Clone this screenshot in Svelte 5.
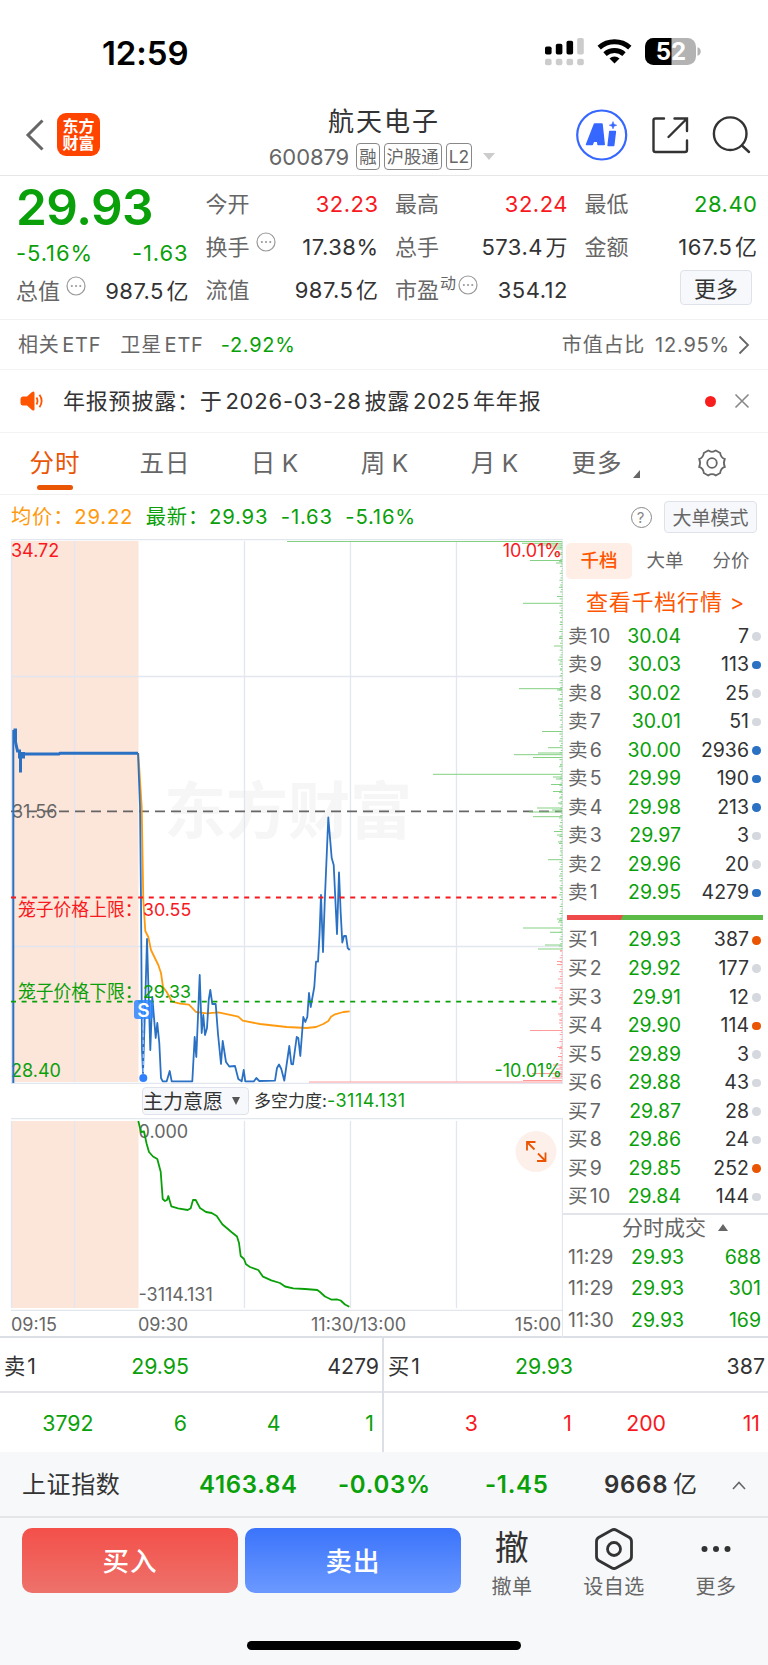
<script>
const quotes = [
  [
    { label: '今开', value: '32.23', tone: 'red' },
    { label: '换手', value: '17.38%', info: true },
    { label: '流值', value: '987.5', unit: '亿' },
  ],
  [
    { label: '最高', value: '32.24', tone: 'red' },
    { label: '总手', value: '573.4', unit: '万' },
    { label: '市盈', sup: '动', value: '354.12', info: true },
  ],
  [
    { label: '最低', value: '28.40', tone: 'green' },
    { label: '金额', value: '167.5', unit: '亿' },
  ],
];

const tabs = ['分时', '五日', '日\u2009K', '周\u2009K', '月\u2009K', '更多'];
let active_tab = '分时';

// [level, price, volume, dot]
const sells = [
  [10, '30.04', 7, ''],
  [9, '30.03', 113, 'blue'],
  [8, '30.02', 25, ''],
  [7, '30.01', 51, ''],
  [6, '30.00', 2936, 'blue'],
  [5, '29.99', 190, 'blue'],
  [4, '29.98', 213, 'blue'],
  [3, '29.97', 3, ''],
  [2, '29.96', 20, ''],
  [1, '29.95', 4279, 'blue'],
];
const buys = [
  [1, '29.93', 387, 'orange'],
  [2, '29.92', 177, ''],
  [3, '29.91', 12, ''],
  [4, '29.90', 114, 'orange'],
  [5, '29.89', 3, ''],
  [6, '29.88', 43, ''],
  [7, '29.87', 28, ''],
  [8, '29.86', 24, ''],
  [9, '29.85', 252, 'orange'],
  [10, '29.84', 144, ''],
];
const trades = [
  ['11:29', '29.93', 688],
  ['11:29', '29.93', 301],
  ['11:30', '29.93', 169],
];

const price_line =
  '138,753 140,806 141,900 142,1050 143,1073 145,1010 147,939 150.3,1050 152.3,997 155.7,1038 157.3,1023 159.3,1043 161,1078 162.7,1081.3 166.7,1081.3 169.7,1071 171.7,1081.3 192.3,1081.3 194.7,1037 196.3,1057 199.7,975 201.7,1033 203.3,1015 205,1035 207,1028 208.7,1000 210.3,990 212.3,1004 215.7,1004 218,1034 221,1064 222.7,1041 226,1062 229.3,1066.5 235,1066 238.3,1079 241.7,1081.3 243.7,1070 245.3,1081.3 254,1081.3 256.3,1078 259.3,1081 275,1080.7 277,1068 279,1064.5 281.3,1069 284.3,1080.7 289.3,1046 291.3,1064 293,1064.3 296.7,1037 298.3,1038 300.3,1056 303.3,1017 305.3,1022 307.3,1017 309,993 310.7,1007 314.3,987 316,961.7 318,961.7 319.5,935 321,895 323,952 324.7,903 328.3,817.5 331.7,858 333.7,865 337,934 339,872.5 340.7,913 342.3,942.5 344,936 346,936 347.7,948 349.7,950';
const avg_line =
  '138.3,753 141.7,807 143.3,900 145.3,931 148.3,937 151,950 158.3,965 161,973 163,987 166.7,992 172,1001.7 180,1003.7 189,1004.7 196,1012 206.7,1013.3 218.3,1012.3 238.3,1016.7 242.7,1020.7 260,1024 286.7,1027 306.7,1028 316,1027 323.3,1024 328.3,1021 331,1016.7 335,1014.3 343.3,1012 349.7,1011.3';
const power_line =
  '138.3,1121 141,1132 144,1131.5 146.7,1144 149,1152 153,1156.5 157.3,1159 160.7,1171.7 162.7,1199 165,1201 167,1200 168.3,1196 171.3,1206.3 178,1208.3 187.7,1210 190.7,1208.3 193,1200 195.7,1200 200,1208 206,1212 211.7,1213 216.7,1216 222.3,1224.3 231.7,1232.3 237,1236.5 239,1243 240.7,1256 244,1259 246,1264.3 250,1267 258.3,1270 263,1276.7 271.3,1280.3 280,1283 285,1286.5 293.3,1288.3 305,1289 317.3,1290 320,1292 325,1296.5 331.7,1299.7 336.7,1299.3 340.7,1300.5 345,1304.5 349.3,1306.7';

// order depth drawn from the right edge: [y, start x]
const ask_depth = [
  [541.5, 287], [543.3, 522], [545, 540], [547, 550], [549, 554], [554, 554], [560.5, 530], [563, 556],
  [587, 561], [596.5, 557], [603.3, 523], [622, 560], [637, 559], [646, 554], [660, 558], [670, 560],
  [688.7, 519], [690, 557], [699, 558], [705, 559], [731.5, 542], [747.7, 548], [753, 538], [754.7, 514],
  [757.5, 533], [765, 560], [774.3, 433], [777, 553], [779, 556], [784.5, 551], [791.5, 553], [798, 559],
  [803, 558], [808, 537], [810, 552], [812, 529], [816.7, 533], [826, 559], [831.5, 554], [835, 557],
  [842, 558], [851, 560], [859.7, 548], [876, 559], [889, 560], [919, 557], [922, 558], [928, 523],
  [932.3, 550], [945, 545], [949, 538],
];
const bid_depth = [
  [951, 560], [961.5, 557], [964.5, 557], [979, 558], [988, 555], [998, 559], [1004, 558], [1008, 560],
  [1014, 558], [1020, 559], [1030.5, 530], [1047.5, 557], [1056.5, 558], [1065, 553], [1069, 556],
  [1073.5, 532], [1076, 555], [1078, 552], [1080.5, 523], [1082, 309],
];
const ticks = Array.from({ length: 230 }, (_, i) => ({
  y: 543 + i * 2.33,
  w: 0.6 + ((i * 37) % 11) * 0.28,
}));
</script>

{#snippet info()}
  <svg class="info" viewBox="0 0 20 20">
    <circle cx="10" cy="10" r="9" />
    <path d="M5.8 10h.1M10 10h.1M14.2 10h.1" />
  </svg>
{/snippet}

{#snippet level(side, row)}
  <div class="level">
    <span class="side">{side}&hairsp;{row[0]}</span>
    <span class="price">{row[1]}</span>
    <span class="volume">{row[2]}</span>
    <i class="dot {row[3]}"></i>
  </div>
{/snippet}

<main>
  <div class="status">
    <span class="clock">12:59</span>
    <svg width="156" height="28" viewBox="545 38 156 28">
      <g>
        <rect x="545" y="46.5" width="6.6" height="8" rx="1.8" />
        <rect x="555.8" y="43.8" width="6.6" height="10.7" rx="1.8" />
        <rect x="566.5" y="40.8" width="6.6" height="13.7" rx="1.8" />
      </g>
      <g fill="#ccc">
        <rect x="577.2" y="38" width="6.6" height="16.5" rx="1.8" />
        <rect x="545" y="58.7" width="6.6" height="6.6" rx="2" />
        <rect x="555.8" y="58.7" width="6.6" height="6.6" rx="2" />
        <rect x="566.5" y="58.7" width="6.6" height="6.6" rx="2" />
        <rect x="577.2" y="58.7" width="6.6" height="6.6" rx="2" />
      </g>
      <g fill="none" stroke="#000" stroke-width="5">
        <path d="M599.2 47.6a23 23 0 0 1 30.6 0" />
        <path d="M605 54.2a14.4 14.4 0 0 1 19 0" />
      </g>
      <path d="M614.5 63.5l-5-5a7.6 7.6 0 0 1 10 0z" />
      <rect x="645" y="38" width="51" height="27" rx="8.5" fill="#b3b3b3" />
      <path d="M671.5 38h-18a8.5 8.5 0 0 0-8.5 8.5v10a8.5 8.5 0 0 0 8.5 8.5h18z" />
      <path d="M697.5 47.3c2 .5 3.200 2 3.200 4.200s-1.200 3.700-3.200 4.200z" fill="#b3b3b3" />
      <text class="battery" x="671" y="60" text-anchor="middle">52</text>
    </svg>
  </div>

  <header>
    <svg class="back" viewBox="0 0 20 34"><path d="M17.500 2.500 3 17l14.500 14.500" /></svg>
    <div class="logo"><span>东方</span><span>财富</span></div>
    <div class="title">
      <h1>航天电子</h1>
      <div class="sub">
        <span class="code">600879</span>
        <span class="tag">融</span>
        <span class="tag">沪股通</span>
        <span class="tag">L2</span>
        <svg width="12" height="7" viewBox="0 0 12 7"><path d="M0 0h12L6 7z" fill="#ccc" /></svg>
      </div>
    </div>
    <svg class="head-icons" viewBox="574 108 180 54">
      <circle cx="601.700" cy="135" r="24.500" fill="none" stroke="#3667ff" stroke-width="2.200" />
      <g fill="#3667ff" stroke="#3667ff" stroke-linejoin="round" stroke-width="1.500">
        <path fill-rule="evenodd" d="M586.500 144.500 594.500 124h7.500l2.200 20.500h-6.200l-.3-3.200h-4.200l-1.200 3.200zM595.500 136.800h2l-.2-4.500z" />
        <path d="M609.800 131.500h5.600l-1.700 14h-5.600z" />
        <path stroke-width=".5" d="M613 121.500l1 2.700 2.800 1-2.800 1-1 2.700-1-2.700-2.800-1 2.800-1z" />
      </g>
      <g fill="none" stroke="#333" stroke-width="2.400" stroke-linecap="round">
        <path d="M664 118.500h-8.500q-2 0-2 2v29.500q0 2 2 2h29.500q2 0 2-2v-9.500" />
        <path d="M674.500 118.500h12.500v12.500M686 119.500l-17.500 17.500" />
        <circle cx="730.200" cy="133.700" r="16.300" />
        <path d="M742 145.500l7 6.500" />
      </g>
    </svg>
  </header>

  <section class="quote">
    <div class="first">
      <div class="last-price">29.93</div>
      <div class="change green"><span>-5.16%</span><span>-1.63</span></div>
      <div class="cell total">
        <span class="label">总值{@render info()}</span>
        <span class="value">987.5&hairsp;亿</span>
      </div>
    </div>
    {#each quotes as column, i}
      <div class="column">
        {#each column as item}
          <div class="cell">
            <span class="label">
              {item.label}{#if item.sup}<sup>{item.sup}</sup>{/if}{#if item.info}{@render info()}{/if}
            </span>
            <span class="value {item.tone || ''}">{item.value}{item.unit ? '\u200a' + item.unit : ''}</span>
          </div>
        {/each}
        {#if i === 2}
          <div class="cell"><button class="more">更多</button></div>
        {/if}
      </div>
    {/each}
  </section>

  <section class="etf">
    <span class="related">相关&hairsp;ETF</span>
    <span>卫星&hairsp;ETF</span>
    <span class="green etf-change">-2.92%</span>
    <span class="ratio">市值占比</span>
    <span class="ratio-value">12.95%</span>
    <svg width="12" height="20" viewBox="0 0 12 20"><path d="M1.500 1.500 10 10l-8.500 8.500" /></svg>
  </section>

  <section class="notice">
    <svg class="horn" viewBox="0 0 24 20">
      <path d="M2.500 5.500h4.500l5-4.500q2.500-1.500 2.500 1v16q0 2.500-2.500 1l-5-4.500h-4.500q-2-.5-2-2.500v-4q0-2 2-2.500z" fill="#ff5500" />
      <path d="M16.500 6.500q2 3.500 0 7M19.500 3.800q4.300 6.200 0 12.400" fill="none" stroke="#ff5500" stroke-width="1.800" />
    </svg>
    <p>年报预披露：于&hairsp;2026-03-28&hairsp;披露&hairsp;2025&hairsp;年年报</p>
    <i class="unread"></i>
    <svg class="close" viewBox="0 0 16 16"><path d="M1.500 1.500l13 13M14.500 1.500l-13 13" /></svg>
  </section>

  <nav>
    {#each tabs as tab}
      <span class="tab" class:active={tab === active_tab}>{tab}</span>
    {/each}
    <svg class="corner" viewBox="0 0 7 8"><path d="M7 0v8H0z" /></svg>
    <svg class="gear" viewBox="0 0 30 28">
      <path d="M11.200 1.500q3.800 2.600 7.600 0l4.400 2.500q.4 4.600 4.600 6.100q-1.800 3.900 0 7.800-4.200 1.500-4.600 6.100l-4.400 2.500q-3.800-2.600-7.600 0l-4.400-2.500q-.4-4.600-4.600-6.100 1.800-3.900 0-7.800 4.200-1.500 4.600-6.100z" />
      <circle cx="15" cy="14" r="4.800" />
    </svg>
  </nav>

  <section class="summary">
    <span class="avg">均价：29.22</span>
    <span class="green">最新：29.93</span>
    <span class="green">-1.63</span>
    <span class="green">-5.16%</span>
    <span class="help">?</span>
    <button class="big-order">大单模式</button>
  </section>

  <section class="market">
    <div class="charts">
      <svg class="price-chart" viewBox="0 539 563 545">
        <rect x="11" y="541" width="127.500" height="541" fill="#fce5d9" />
        <text class="watermark" x="164" y="834">东方财富</text>
        <g class="grid">
          <path d="M11 539.500h552M11 1083.500h552" />
          <path d="M11.500 541v542M74.500 541v541M244.500 541v541M350.500 541v541M456.500 541v541M562.500 541v543M11 676.500h551M11 946.500h551" />
        </g>
        <path class="mid" d="M11 811.300h551" />
        <g class="asks">
          {#each ask_depth as [y, x]}
            <path d="M{x} {y}H562" />
          {/each}
        </g>
        <g class="bids">
          {#each bid_depth as [y, x]}
            <path d="M{x} {y}H562" />
          {/each}
        </g>
        {#each ticks as t}
          <path class={t.y < 950 ? 'asks' : 'bids'} d="M{562.5 - t.w} {t.y}H562.500" />
        {/each}
        <text class="gray" x="12" y="817.500">31.56</text>
        <text class="red" x="11" y="557">34.72</text>
        <text class="red" x="562" y="557" text-anchor="end">10.01%</text>
        <text class="green" x="11" y="1076.500">28.40</text>
        <text class="green" x="562" y="1076.500" text-anchor="end">-10.01%</text>
        <path class="auction" d="M13.300 1083V730" />
        <path class="opening" d="M13.500 730h2v12l2 9h2v5.500l1-4v20M18 757h7M19 753.500h6M22 754h37l1-.7h78" />
        <polyline class="average" points={avg_line} />
        <polyline class="last" points={price_line} />
        <path class="limit-up" d="M11 897.500h551" />
        <path class="limit-down" d="M11 1001.700h551" />
        <text class="red limit" x="18" y="915.500">笼子价格上限：</text>
        <text class="red limit" x="143" y="915.500">30.55</text>
        <text class="green limit" x="18" y="998">笼子价格下限：</text>
        <text class="green limit" x="143" y="998">29.33</text>
        <path class="sell-line" d="M143.300 1019v55" />
        <circle cx="143.300" cy="1078" r="4" fill="#2f80ff" />
        <rect class="sell-mark" x="134" y="1000" width="19" height="19" rx="3" />
        <text class="sell-text" x="143.500" y="1016.500" text-anchor="middle">S</text>
      </svg>

      <div class="indicator">
        <button>主力意愿<svg viewBox="0 0 8 8"><path d="M0 0h8L4 8z" /></svg></button>
        <span>多空力度:<b>-3114.131</b></span>
      </div>

      <svg class="power-chart" viewBox="0 1118 563 193">
        <rect x="11" y="1121" width="127.500" height="187" fill="#fce5d9" />
        <g class="grid">
          <path d="M11 1118.500h552M11 1310.500h552" />
          <path d="M11.500 1121v187M74.500 1121v187M244.500 1121v187M350.500 1121v187M456.500 1121v187M562.500 1118v193" />
        </g>
        <text class="gray" x="138.500" y="1138">0.000</text>
        <text class="gray" x="138.500" y="1300.500">-3114.131</text>
        <polyline class="power" points={power_line} />
        <circle cx="536" cy="1151.500" r="20.500" fill="#fdf0ea" />
        <path class="expand" d="M527 1150.500v-8.500h8.500M527 1142l7.500 7.500M545.500 1152.500v8.500h-8.500M545.500 1161l-7.500-7.500" />
      </svg>

      <div class="axis">
        <span>09:15</span>
        <span>09:30</span>
        <span>11:30/13:00</span>
        <span>15:00</span>
      </div>
    </div>

    <aside>
      <div class="book-tabs">
        <span class="on">千档</span>
        <span>大单</span>
        <span>分价</span>
      </div>
      <div class="depth-link">查看千档行情 &gt;</div>
      {#each sells as row}
        {@render level('卖', row)}
      {/each}
      <div class="balance"></div>
      {#each buys as row}
        {@render level('买', row)}
      {/each}
      <div class="trade-head">分时成交<svg viewBox="0 0 10 7"><path d="M5 0l5 7H0z" /></svg></div>
      {#each trades as [time, price, volume]}
        <div class="trade">
          <span>{time}</span>
          <span class="green">{price}</span>
          <span class="green volume">{volume}</span>
        </div>
      {/each}
    </aside>
  </section>

  <section class="queue">
    <div class="half">
      <div class="best">
        <span>卖&hairsp;1</span><span class="green">29.95</span><span>4279</span>
      </div>
      <div class="orders green">
        <span>3792</span><span>6</span><span>4</span><span>1</span>
      </div>
    </div>
    <div class="half">
      <div class="best">
        <span>买&hairsp;1</span><span class="green">29.93</span><span>387</span>
      </div>
      <div class="orders red">
        <span>3</span><span>1</span><span>200</span><span>11</span>
      </div>
    </div>
  </section>

  <section class="index">
    <span class="name">上证指数</span>
    <b class="green point">4163.84</b>
    <b class="green percent">-0.03%</b>
    <b class="green diff">-1.45</b>
    <b class="amount">9668&thinsp;<em>亿</em></b>
    <svg width="14" height="9" viewBox="0 0 14 9"><path d="M1 8l6-6.500L13 8" /></svg>
  </section>

  <footer>
    <div class="actions">
      <button class="buy">买入</button>
      <button class="sell">卖出</button>
      <div class="tool">
        <span class="glyph">撤</span>
        <span>撤单</span>
      </div>
      <div class="tool">
        <svg viewBox="0 0 42 42">
          <path d="M18.500 2.200q2.500-1.400 5 0L36 9.200q2.500 1.500 2.500 4.300v15q0 2.800-2.500 4.300l-12.500 7q-2.500 1.400-5 0L6 32.800q-2.500-1.500-2.500-4.300v-15Q3.500 10.700 6 9.200z" />
          <circle cx="21" cy="21" r="6.500" />
        </svg>
        <span>设自选</span>
      </div>
      <div class="tool">
        <svg viewBox="0 0 42 42" class="dots">
          <circle cx="9.500" cy="21" r="3" />
          <circle cx="21" cy="21" r="3" />
          <circle cx="32.500" cy="21" r="3" />
        </svg>
        <span>更多</span>
      </div>
    </div>
    <div class="home"></div>
  </footer>
</main>

<style>
:global(body) {
  background-color: #fff;
}

main {
  width: 768px;
  height: 1665px;
  overflow: hidden;
  font-family: Inter, 'Noto Sans CJK SC', sans-serif;
  font-size: 22px;
  line-height: 1;
  color: #333;
  display: flex;
  flex-direction: column;
}
main * {
  box-sizing: border-box;
}
svg {
  flex: none;
  display: block;
}
span,
button,
b {
  white-space: nowrap;
}
button {
  flex: none;
  font-family: inherit;
  color: inherit;
  padding: 0;
  border: 1px solid #dfe2ea;
  border-radius: 4px;
  background-color: #f7f8fb;
}
.green {
  color: #0aa00a;
  fill: #0aa00a;
}
.red {
  color: #f8191e;
  fill: #f8191e;
}
.gray {
  fill: #666;
}

.status {
  height: 103px;
  padding: 1px 67px 0 102px;
  display: flex;
  align-items: center;
  justify-content: space-between;
}
.clock {
  padding-top: 2px;
  color: #000;
  font-size: 33px;
  font-weight: 600;
  letter-spacing: -0.1px;
}
.battery {
  fill: #fff;
  font-size: 24px;
  font-weight: 700;
}

header {
  height: 73px;
  padding: 0 14px 0 25px;
  border-bottom: 1px solid #e6e6e6;
  display: flex;
  align-items: center;
}
.back {
  width: 20px;
  height: 34px;
  margin-top: -9px;
  fill: none;
  stroke: #666;
  stroke-width: 3;
}
.logo {
  width: 43px;
  height: 43px;
  margin: -9px 0 0 12px;
  border-radius: 9px;
  background-color: #ff4400;
  color: #fff;
  font-size: 16px;
  font-weight: 700;
  line-height: 17px;
  display: flex;
  flex-direction: column;
  align-items: center;
  justify-content: center;
}
.title {
  flex: 1;
  margin-left: 94px;
  display: flex;
  flex-direction: column;
  align-items: center;
}
h1 {
  margin: 0;
  font-size: 26px;
  line-height: 35px;
  font-weight: 400;
  letter-spacing: 2px;
}
.sub {
  height: 35px;
  margin-left: -4px;
  display: flex;
  align-items: center;
  color: #666;
}
.code {
  margin-right: 7px;
  letter-spacing: -0.1px;
}
.tag {
  height: 27px;
  margin-right: 4px;
  padding: 0 2px;
  border: 1px solid #888;
  border-radius: 4px;
  font-size: 17.400px;
  line-height: 25px;
}
.sub svg {
  margin-left: 7px;
}
.head-icons {
  width: 180px;
  height: 54px;
  margin-top: -9px;
}

.quote {
  height: 144px;
  padding: 6px 11px 0 16px;
  border-bottom: 1px solid #f1f1f1;
  display: grid;
  grid-template-columns: repeat(4, 1fr);
  column-gap: 17px;
}
.last-price {
  height: 50px;
  line-height: 50px;
  font-size: 49.500px;
  font-weight: 600;
  letter-spacing: -0.5px;
  color: #0aa00a;
}
.change {
  height: 42px;
  display: flex;
  align-items: center;
  justify-content: space-between;
  letter-spacing: 0.9px;
}
.value {
  letter-spacing: 0.5px;
  margin-right: -0.5px;
}
.cell {
  height: 43px;
  display: flex;
  align-items: center;
  justify-content: space-between;
}
.total {
  height: 33px;
}
.label {
  color: #666;
  display: flex;
  align-items: center;
}
sup {
  font-size: 16px;
  line-height: 1;
  margin: -14px 2px 0 1px;
}
.info {
  width: 20px;
  height: 20px;
  margin: -10px 0 0 6px;
  fill: none;
  stroke: #999;
  stroke-width: 1.2;
}
sup + .info {
  margin-left: 0;
}
.info path {
  stroke-width: 2;
  stroke-linecap: round;
}
.more {
  width: 72px;
  height: 35px;
  margin: -4px 5px 0 auto;
  padding-bottom: 3px;
  font-size: 22px;
}

.etf {
  height: 50px;
  padding: 0 18px 0 18px;
  border-bottom: 1px solid #f3f3f3;
  display: flex;
  align-items: center;
  font-size: 20px;
  color: #666;
  letter-spacing: 0.8px;
}
.related {
  margin-right: 19px;
}
.etf-change {
  margin-left: 17px;
  letter-spacing: 0.7px;
}
.ratio {
  margin-left: auto;
}
.ratio-value {
  margin: 0 8px 0 10px;
  letter-spacing: 0.8px;
}
.etf svg {
  fill: none;
  stroke: #666;
  stroke-width: 1.8;
}

.notice {
  height: 63px;
  padding: 0 18px 0 20px;
  border-bottom: 1px solid #f3f3f3;
  display: flex;
  align-items: center;
}
.horn {
  width: 24px;
  height: 20px;
  margin-right: 19px;
}
.notice p {
  margin: 0;
  flex: 1;
  letter-spacing: 0.8px;
}
.unread {
  width: 11px;
  height: 11px;
  margin-right: 18px;
  border-radius: 50%;
  background-color: #f91e1e;
}
.close {
  width: 16px;
  height: 16px;
  stroke: #888;
  stroke-width: 1.6;
}

nav {
  height: 62px;
  border-bottom: 1px solid #f1f1f1;
  display: flex;
  align-items: center;
  color: #666;
  font-size: 24.500px;
}
.tab {
  width: 110px;
  height: 61px;
  line-height: 61px;
  text-align: center;
  letter-spacing: 1px;
  display: flex;
  flex-direction: column;
  align-items: center;
}
.tab:nth-child(6) {
  width: 94px;
}
.active {
  color: #ea5504;
}
.active::after {
  content: '';
  width: 36px;
  height: 5px;
  margin-top: -9px;
  border-radius: 3px;
  background-color: #ea5504;
}
.corner {
  width: 7px;
  height: 8px;
  margin: 20px 57px 0 -11px;
  fill: #666;
}
.gear {
  width: 30px;
  height: 28px;
  margin-top: -1px;
  fill: none;
  stroke: #666;
  stroke-width: 1.8;
}

.summary {
  height: 44px;
  padding: 0 11px;
  display: flex;
  align-items: center;
  gap: 12.500px;
  font-size: 20.300px;
  letter-spacing: 0.8px;
}
.avg {
  color: #ff9a0f;
}
.help {
  width: 21px;
  height: 21px;
  margin-left: auto;
  border: 1px solid #888;
  border-radius: 50%;
  font-size: 15px;
  line-height: 19px;
  text-align: center;
  color: #888;
}
.big-order {
  width: 93px;
  height: 32px;
  font-size: 19px;
  padding-bottom: 2px;
  color: #666;
}

.market {
  height: 799px;
  border-bottom: 2px solid #dcdfe5;
  display: flex;
}
.charts {
  width: 563px;
}
.charts text {
  font-size: 18px;
}
.charts text.limit {
  font-size: 17.8px;
}
.charts text.watermark {
  font-size: 62px;
  font-weight: 700;
  fill: #f6f6f6;
}
.price-chart {
  width: 563px;
  height: 545px;
}
.grid {
  stroke: #e2e6ef;
  stroke-width: 1.3;
}
.mid {
  stroke: #666;
  stroke-width: 1.8;
  stroke-dasharray: 10 6;
}
.asks {
  stroke: #84d184;
}
.bids {
  stroke: #ff9b9b;
}
.auction {
  stroke: #2a71c4;
  stroke-width: 2;
}
.opening {
  fill: none;
  stroke: #2a71c4;
  stroke-width: 3;
}
.last,
.average,
.power {
  fill: none;
  stroke: #2a71c4;
  stroke-width: 1.8;
  stroke-linejoin: round;
}
.average {
  stroke: #ff9a0f;
}
.power {
  stroke: #0aa00a;
}
.limit-up,
.limit-down {
  stroke: #f8191e;
  stroke-width: 1.8;
  stroke-dasharray: 5 5.6;
}
.limit-down {
  stroke: #0aa00a;
}
.sell-line {
  stroke: #8fbaff;
  stroke-width: 1.5;
  stroke-dasharray: 4 3;
}
.sell-mark {
  fill: #2f86ff;
  fill-opacity: 0.85;
}
.charts text.sell-text {
  font-weight: 600;
  font-size: 19px;
  fill: #fff;
}

.indicator {
  height: 34px;
  padding: 3px 0 3px 142px;
  display: flex;
  align-items: center;
  font-size: 17px;
}
.indicator button {
  width: 107px;
  height: 28px;
  margin-right: 5px;
  padding-bottom: 1px;
  font-size: 20px;
  display: flex;
  align-items: center;
}
.indicator button svg {
  width: 8px;
  height: 8px;
  margin-left: 9px;
  fill: #555;
}
.indicator b {
  font-weight: 400;
  font-size: 18px;
  letter-spacing: 0.5px;
  color: #0aa00a;
}
.power-chart {
  width: 563px;
  height: 193px;
}
.expand {
  fill: none;
  stroke: #ea5504;
  stroke-width: 1.8;
}
.axis {
  height: 27px;
  padding: 0 1px 0 11px;
  border-right: 1px solid #e2e6ef;
  display: grid;
  grid-template-columns: 127px 127px 1fr auto;
  align-items: center;
  font-size: 18px;
  color: #666;
}
.axis span:nth-child(3) {
  margin-left: 46px;
}

aside {
  width: 205px;
  padding-top: 4px;
}
.book-tabs {
  padding-left: 3px;
  display: flex;
  color: #666;
  font-size: 18.500px;
}
.book-tabs span {
  width: 66px;
  height: 36px;
  border-radius: 5px;
  line-height: 34px;
  text-align: center;
}
.book-tabs .on {
  background-color: #ffeee5;
  color: #ff5500;
  font-weight: 500;
}
.depth-link {
  height: 43px;
  line-height: 46px;
  text-align: center;
  color: #ff5500;
  font-size: 22px;
  letter-spacing: 0.8px;
}
.level {
  height: 28.56px;
  padding: 0 7px 0 5px;
  display: grid;
  grid-template-columns: 57px 56px 68px 1fr;
  align-items: center;
  font-size: 19.500px;
}
.level .side {
  color: #666;
  letter-spacing: 0.3px;
}
.level .price {
  color: #0aa00a;
  text-align: right;
}
.volume {
  text-align: right;
}
.dot {
  width: 8.6px;
  height: 8.6px;
  margin-left: auto;
  border-radius: 50%;
  background-color: #d5d8de;
}
.dot.blue {
  background-color: #2a71c4;
}
.dot.orange {
  background-color: #ea5504;
}
.balance {
  height: 4.500px;
  margin: 8px 5px 6px 4px;
  background: linear-gradient(115deg, #ee4a4a 28%, #5cba47 28.5%);
}
.trade-head {
  height: 29px;
  margin-top: 2px;
  padding: 0 0 2px 19px;
  border-top: 2px solid #e2e4ea;
  display: flex;
  align-items: center;
  justify-content: center;
  font-size: 21px;
  color: #666;
}
.trade-head svg {
  width: 10px;
  height: 7px;
  margin-left: 12px;
  fill: #666;
}
.trade {
  height: 31.200px;
  padding: 0 7px 0 5px;
  display: grid;
  grid-template-columns: 63px 60px 1fr;
  align-items: center;
  font-size: 19.500px;
  color: #666;
}

.queue {
  height: 114px;
  display: grid;
  grid-template-columns: 384px 384px;
  font-size: 21.300px;
}
.half:first-child {
  border-right: 2px solid #dcdfe5;
}
.best {
  height: 55px;
  padding: 4px 3px 0 4px;
  border-bottom: 2px solid #e2e4ea;
  display: grid;
  grid-template-columns: 60px 125px 1fr;
  align-items: center;
  text-align: right;
}
.best span:first-child {
  text-align: left;
}
.orders {
  height: 59px;
  padding: 2px 8px 0 0;
  display: grid;
  grid-template-columns: repeat(4, 1fr);
  align-items: center;
  text-align: right;
}

.index {
  height: 66px;
  padding: 2px 22px 0;
  background-color: #f7f8fa;
  border-bottom: 2px solid #e4e6e9;
  display: flex;
  align-items: center;
  font-size: 24px;
}
.index b {
  font-weight: 600;
  letter-spacing: 0.7px;
}
.name {
  width: 177px;
  letter-spacing: 0.6px;
}
.point {
  width: 139px;
}
.percent {
  width: 147px;
}
.diff {
  width: 119px;
}
.amount {
  flex: 1;
}
.amount em {
  font-style: normal;
  font-weight: 400;
}
.index svg {
  fill: none;
  stroke: #666;
  stroke-width: 1.6;
}

footer {
  flex: 1;
  background-color: #f7f8fa;
  display: flex;
  flex-direction: column;
  align-items: center;
}
.actions {
  width: 768px;
  height: 123px;
  padding: 10px 0 0 22px;
  display: flex;
}
.actions button {
  width: 216px;
  height: 65px;
  margin-right: 7px;
  padding-bottom: 3px;
  border: none;
  border-radius: 10px;
  color: #fff;
  font-size: 26.500px;
  font-weight: 500;
  letter-spacing: 1px;
}
.actions .buy {
  background: linear-gradient(#f35049, #ed726b);
}
.actions .sell {
  margin-right: 0;
  background: linear-gradient(#3b74fb, #6b99ff);
}
.tool {
  width: 102px;
  display: flex;
  flex-direction: column;
  align-items: center;
  color: #666;
  font-size: 20px;
  letter-spacing: 0.5px;
}
.tool svg,
.glyph {
  height: 42px;
  margin-bottom: 7px;
  line-height: 40px;
}
.glyph {
  color: #333;
  font-size: 34px;
}
.tool svg {
  width: 42px;
  fill: none;
  stroke: #333;
  stroke-width: 2.800;
}
.tool .dots {
  fill: #333;
  stroke: none;
}
.home {
  width: 274px;
  height: 9px;
  border-radius: 5px;
  background-color: #000;
}
</style>
